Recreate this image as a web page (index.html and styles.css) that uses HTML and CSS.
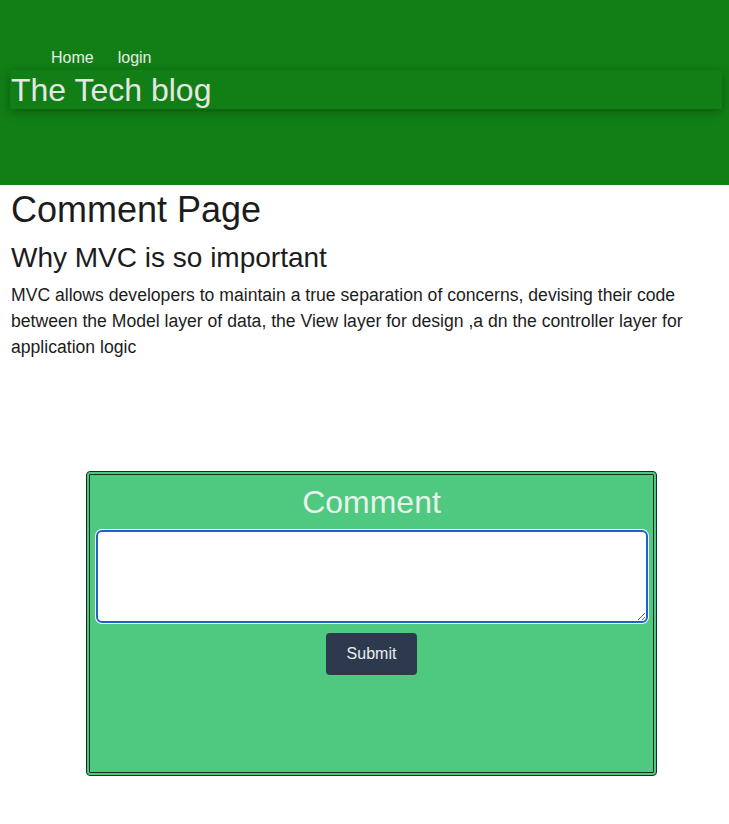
FILE: index.html
```html
<!DOCTYPE html>
<html>
<head>
<meta charset="utf-8">
<link rel="stylesheet" href="styles.css">
</head>
<body>
<header class="site-header">
  <nav class="nav">
    <a href="#" class="nav-link">Home</a>
    <a href="#" class="nav-link">login</a>
  </nav>
  <div class="title-bar">
    <h1 class="site-title">The Tech blog</h1>
  </div>
</header>
<main class="content">
  <h2 class="page-title">Comment Page</h2>
  <h3 class="post-title">Why MVC is so important</h3>
  <p class="post-body">MVC allows developers to maintain a true separation of concerns, devising their code between the Model layer of data, the View layer for design ,a dn the controller layer for application logic</p>
  <form class="comment-card">
    <h4 class="comment-title">Comment</h4>
    <textarea class="comment-input"></textarea>
    <button type="button" class="submit-btn">Submit</button>
  </form>
</main>
</body>
</html>
```
FILE: styles.css
```css
* { box-sizing: border-box; }
body {
  margin: 0;
  font-family: "Liberation Sans", Arial, sans-serif;
  color: #1c1c1c;
  background: #fff;
}
.site-header {
  background: #117f15;
  height: 185px;
  padding-top: 47px;
}
.nav {
  display: flex;
  gap: 24px;
  padding-left: 51px;
  height: 22px;
}
.nav-link {
  color: #e8ece8;
  text-decoration: none;
  font-size: 16px;
  line-height: 22px;
}
.title-bar {
  margin: 1px 7px 0 10px;
  height: 39px;
  background: #117f15;
  box-shadow: 0 3px 10px rgba(0,0,0,0.3);
}
.site-title {
  margin: 0;
  padding-left: 1px;
  font-weight: normal;
  font-size: 32px;
  line-height: 40px;
  color: #e6e6e6;
}
.content {
  padding: 0 11px;
}
.page-title {
  margin: 3px 0 0;
  font-weight: normal;
  font-size: 36px;
  line-height: 44px;
}
.post-title {
  margin: 8px 0 0;
  font-weight: normal;
  font-size: 28px;
  line-height: 36px;
}
.post-body {
  margin: 6px 0 0;
  font-size: 17.6px;
  line-height: 26px;
}
.comment-card {
  margin: 111px 0 0 75px;
  width: 571px;
  height: 305px;
  background: #4ec97f;
  border: 4px double #142e22;
  border-radius: 4px;
  display: flex;
  flex-direction: column;
  align-items: center;
  padding: 8px 6px;
}
.comment-title {
  margin: 0;
  font-weight: normal;
  font-size: 32px;
  line-height: 38px;
  color: #e8f2ec;
}
.comment-input {
  margin-top: 9px;
  width: 552px;
  height: 93px;
  border: 2px solid #1e62c8;
  border-radius: 6px;
  box-shadow: 0 0 0 1px #fff;
  background: #fff;
  resize: vertical;
  outline: none;
}
.submit-btn {
  margin-top: 10px;
  width: 91px;
  height: 42px;
  background: #2d3a4e;
  color: #e8eef2;
  border: none;
  border-radius: 4px;
  font-family: "Liberation Sans", Arial, sans-serif;
  font-size: 16px;
}
```
